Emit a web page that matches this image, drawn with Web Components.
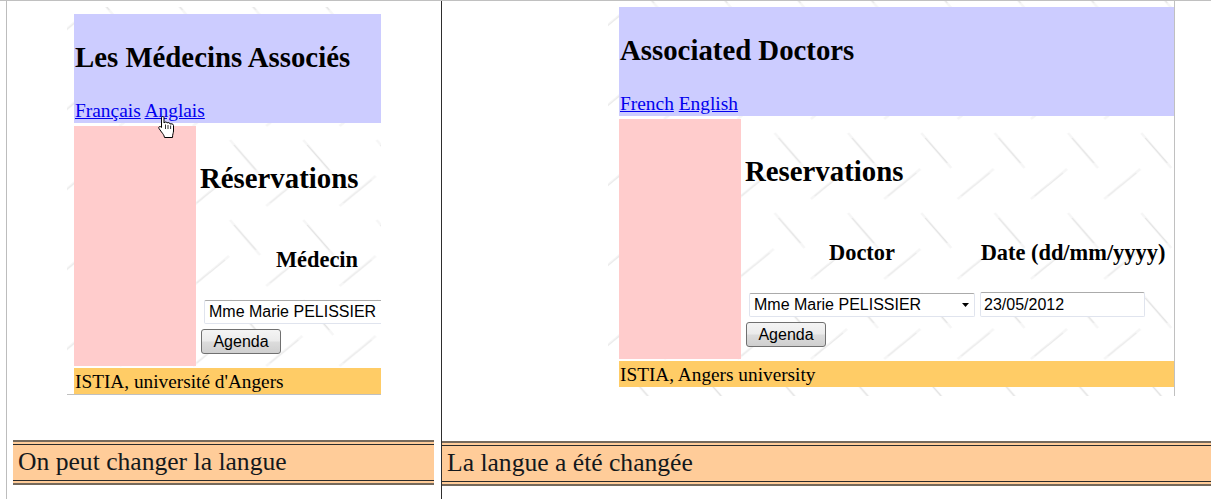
<!DOCTYPE html>
<html lang="fr">
<head>
<meta charset="utf-8">
<title>Les Médecins Associés</title>
<style>
  html, body { margin: 0; padding: 0; background: #fff; }
  body { font-family: "Liberation Serif", "Times New Roman", serif; }
</style>
</head>
<body>
<app-frame>
  <div slot="left">
    <demo-panel variant="left" shift="-3.67">
      <site-header>
        <span slot="title">Les Médecins Associés</span>
        <a href="#">Français</a> <a href="#">Anglais</a>
      </site-header>
      <resa-main heading="Réservations">
        <resa-field label="Médecin"><combo-box value="Mme Marie PELISSIER"></combo-box></resa-field>
      </resa-main>
      <site-footer>ISTIA, université d'Angers</site-footer>
      <hand-cursor></hand-cursor>
    </demo-panel>
    <note-bar variant="left">On peut changer la langue</note-bar>
  </div>
  <div slot="right">
    <demo-panel variant="right" shift="0">
      <site-header>
        <span slot="title">Associated Doctors</span>
        <a href="#">French</a> <a href="#">English</a>
      </site-header>
      <resa-main heading="Reservations">
        <resa-field label="Doctor"><combo-box value="Mme Marie PELISSIER" arrow></combo-box></resa-field>
        <resa-field label="Date (dd/mm/yyyy)" wide><text-box value="23/05/2012"></text-box></resa-field>
      </resa-main>
      <site-footer>ISTIA, Angers university</site-footer>
    </demo-panel>
    <note-bar variant="right">La langue a été changée</note-bar>
  </div>
</app-frame>

<script>
function defineElement(tagName, css, html, extra) {
  class Element extends HTMLElement {
    constructor() {
      super();
      this.attachShadow({ mode: "open" });
      this.shadowRoot.innerHTML = `<style>${css}</style>${html}`;
    }
    connectedCallback() {
      if (extra) extra.call(this, this.shadowRoot);
    }
  }
  customElements.define(tagName, Element);
}

defineElement("app-frame", `
  :host {
    display: grid;
    grid-template-columns: 435px 1fr;
    width: 1211px;
    height: 499px;
    box-sizing: border-box;
    padding-left: 6px;
    border-top: 1px solid #c0c0c0;
    overflow: hidden;
  }
  .left { border-left: 1px solid #bdbdbd; min-width: 0; }
  .right { border-left: 1px solid #2e2e2e; min-width: 0; }
`, `
  <div class="left"><slot name="left"></slot></div>
  <div class="right"><slot name="right"></slot></div>
`);

defineElement("demo-panel", `
  :host {
    display: block;
    position: relative;
    box-sizing: border-box;
    overflow: hidden;
    background: #fff;
  }
  :host([variant="left"]) {
    width: 314px;
    height: 388px;
    margin: 6px 0 0 60px;
    padding: 7px 0 0 7px;
    border-bottom: 1px solid #c0c0c0;
  }
  :host([variant="right"]) {
    width: 567px;
    height: 396px;
    margin: -1px 0 0 166px;
    padding: 7px 0 0 11px;
    border-right: 1px solid #c0c0c0;
  }
  svg { position: absolute; left: 0; top: 0; width: 100%; height: 100%; }
  .content { position: relative; }
`, `
  <svg aria-hidden="true">
    <defs>
      <pattern id="plate" patternUnits="userSpaceOnUse" width="73.33" height="80">
        <g fill="none" stroke="#f6f6f6" stroke-width="2.6">
          <path d="M20 53L50 88M20 -27L50 8M56.3 39L92.3 9M-17 39L19 9"/>
        </g>
        <g fill="none" stroke="#e2e2e2" stroke-width="1">
          <path d="M24 58L46 83M24 -22L46 3"/>
        </g>
        <g fill="none" stroke="#ebebeb" stroke-width="1">
          <path d="M60 36L88 13M-13 36L15 13"/>
        </g>
      </pattern>
    </defs>
    <rect width="100%" height="100%" fill="url(#plate)"/>
  </svg>
  <div class="content"><slot></slot></div>
`, function (root) {
  const shift = this.getAttribute("shift") || "0";
  root.querySelector("pattern").setAttribute("patternTransform", `translate(${shift} 0)`);
});

defineElement("site-header", `
  :host {
    display: block;
    box-sizing: border-box;
    height: 109px;
    padding: 28px 0 0 1px;
    background: #ccccff;
    font-size: 19.4px;
    line-height: 21px;
    white-space: nowrap;
  }
  h1 { margin: 0 0 28px; font-size: 28.8px; line-height: 30px; font-weight: bold; color: #000; }
  ::slotted(a) { color: #0000ee; }
`, `
  <h1><slot name="title"></slot></h1>
  <slot></slot>
`);

defineElement("resa-main", `
  :host {
    display: grid;
    grid-template-columns: 122px minmax(0, 1fr);
    height: 240px;
    margin-top: 3px;
    overflow: hidden;
  }
  .side { background: #ffcccc; }
  .body { padding-left: 5px; min-width: 0; }
  h2 { margin: 37px 0 0 -1px; font-size: 28.8px; line-height: 30px; font-weight: bold; color: #000; white-space: nowrap; }
  .fields { display: flex; gap: 5px; padding-left: 3px; margin-top: 56px; }
  button {
    display: block;
    box-sizing: border-box;
    width: 80px;
    height: 25px;
    margin: 5px 0 0;
    padding: 0;
    border: 1px solid #707070;
    border-radius: 3px;
    background: linear-gradient(#f4f4f4, #ebebeb 48%, #dcdcdc 52%, #cfcfcf);
    color: #000;
    font: 16px "Liberation Sans", Arial, sans-serif;
  }
`, `
  <div class="side"></div>
  <div class="body">
    <h2></h2>
    <div class="fields"><slot></slot></div>
    <button type="button">Agenda</button>
  </div>
`, function (root) {
  root.querySelector("h2").textContent = this.getAttribute("heading");
});

defineElement("resa-field", `
  :host { display: block; flex: none; width: 226px; }
  :host([wide]) { width: 186px; }
  h3 { margin: -1px 0 29px; font-size: 22.4px; line-height: 23px; font-weight: bold; text-align: center; white-space: nowrap; color: #000; }
`, `
  <h3></h3>
  <slot></slot>
`, function (root) {
  root.querySelector("h3").textContent = this.getAttribute("label");
});

defineElement("combo-box", `
  :host {
    display: flex;
    align-items: center;
    box-sizing: border-box;
    width: 226px;
    height: 24px;
    padding: 0 5px 0 4px;
    background: #fff;
    border: 1px solid #e0e4ee;
    border-top-color: #ababab;
    border-radius: 2px;
    font: 16px "Liberation Sans", Arial, sans-serif;
    color: #000;
    white-space: nowrap;
  }
  span { flex: 1; }
  svg { width: 7px; height: 4px; display: none; }
  :host([arrow]) svg { display: block; }
`, `
  <span></span>
  <svg viewBox="0 0 7 4" aria-hidden="true"><path d="M0 0H7L3.5 4Z" fill="#000"/></svg>
`, function (root) {
  root.querySelector("span").textContent = this.getAttribute("value");
});

defineElement("text-box", `
  :host {
    display: flex;
    align-items: center;
    box-sizing: border-box;
    width: 165px;
    height: 25px;
    margin-top: -1px;
    padding: 0 3px;
    background: #fff;
    border: 1px solid #e0e4ee;
    border-top-color: #ababab;
    border-radius: 2px;
    font: 16px "Liberation Sans", Arial, sans-serif;
    color: #000;
  }
`, `<span></span>`, function (root) {
  root.querySelector("span").textContent = this.getAttribute("value");
});

defineElement("site-footer", `
  :host {
    display: block;
    box-sizing: border-box;
    height: 26px;
    margin-top: 2px;
    padding-left: 1px;
    background: #ffcc66;
    font-size: 19.3px;
    line-height: 27px;
    color: #000;
    white-space: nowrap;
  }
`, `<slot></slot>`);

defineElement("hand-cursor", `
  :host { position: absolute; left: 84px; top: 102px; width: 18px; height: 23px; }
  svg { display: block; width: 18px; height: 23px; }
`, `
  <svg viewBox="0 0 18 23" aria-hidden="true">
    <path d="M3.5 1.5C3.5 .2 6 .2 6 1.5V7C7 5.5 9 5.8 9 7C10 6.2 12 6.5 12 8C13 7.5 15.5 7.8 15.5 9.5V15C15.5 17 14.5 18 14.5 21.5H6.5C6 19 5 18 3.5 16L1 12.5C0 11 2 9.5 3.5 11.5Z" fill="#fff" stroke="#000" stroke-width="1"/>
    <path d="M7.5 8.5V13M10 9V13M12.6 9.5V13" fill="none" stroke="#000" stroke-width=".8"/>
  </svg>
`);

defineElement("note-bar", `
  :host {
    display: block;
    box-sizing: border-box;
    height: 45px;
    margin-top: 45px;
    background: #ffcc99;
    border-top: 2px solid #75695c;
    border-bottom: 2px solid #75695c;
    font-size: 25.6px;
    color: #14181c;
    white-space: nowrap;
  }
  :host([variant="left"]) { width: 421px; margin-left: 6px; }
  :host([variant="right"]) { width: 769px; }
  .inner {
    box-sizing: border-box;
    margin-top: 2px;
    height: 37px;
    padding-left: 5px;
    border-top: 1px solid #2b2b2b;
    border-bottom: 1px solid #2b2b2b;
    line-height: 34px;
  }
`, `<div class="inner"><slot></slot></div>`);
</script>
</body>
</html>
